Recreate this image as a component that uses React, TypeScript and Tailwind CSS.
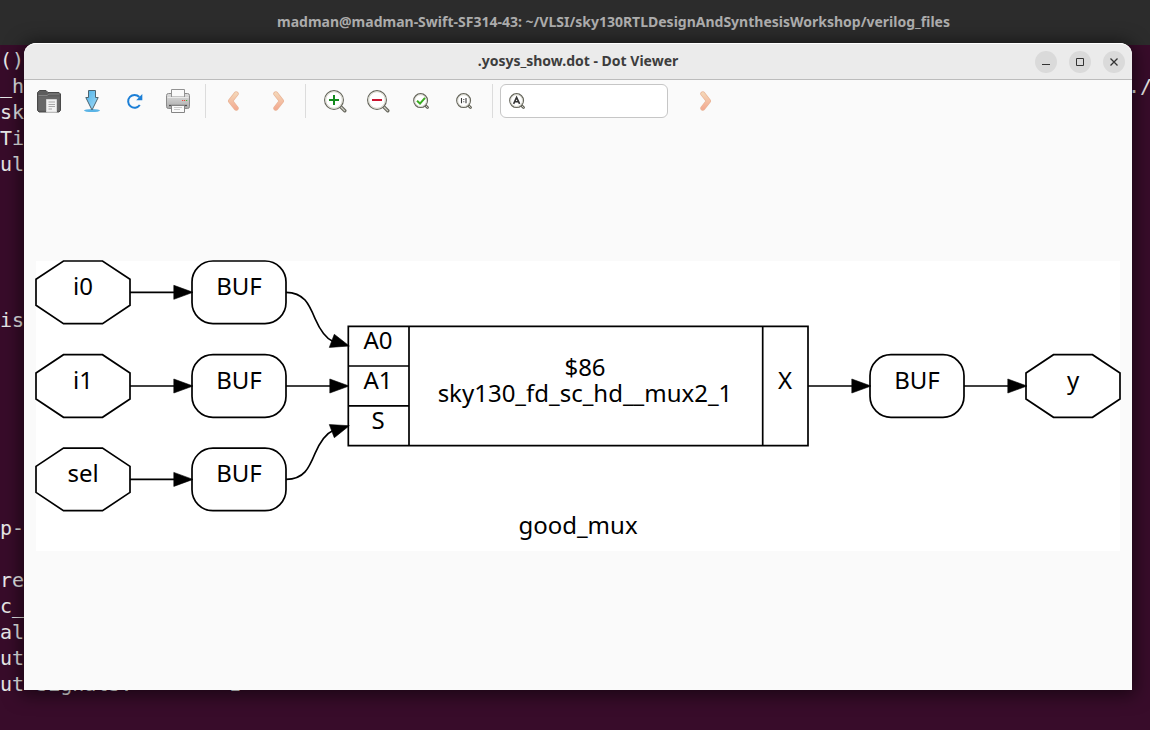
import type { ReactNode } from "react";

type TerminalLine = { start: string; end?: string };

const terminalLines: TerminalLine[] = [
  { start: "()" },
  { start: "_h", end: "./" },
  { start: "sk" },
  { start: "Ti" },
  { start: "ul" },
  { start: "" },
  { start: "" },
  { start: "" },
  { start: "" },
  { start: "" },
  { start: "is" },
  { start: "" },
  { start: "" },
  { start: "" },
  { start: "" },
  { start: "" },
  { start: "" },
  { start: "" },
  { start: "p-" },
  { start: "" },
  { start: "re" },
  { start: "c_" },
  { start: "al" },
  { start: "ut" },
  { start: "ut signals:        1" },
];

function FolderIcon() {
  return (
    <svg className="size-6" viewBox="0 0 24 24" aria-hidden="true">
      <path d="M.5 21.500V3.500L2.500 1.500H9L11 3.500H22L23.500 5V21.500L22 23H2Z" fill="#5d5d5d" stroke="#494949" />
      <path d="M1.500 6.500H10L12 5H22.500" fill="none" stroke="#858585" />
      <path d="M1.500 7.500H22.500V21.500H1.500Z" fill="#707070" opacity=".6" />
      <path d="M9.500 10.500H19.500V23H9.500Z" fill="#f2f2f2" stroke="#d5d5d5" />
      <path d="M11.500 13H18M11.500 15.500H18M11.500 17.500H18M11.500 20H15" stroke="#a8a8a8" />
    </svg>
  );
}

function DownloadIcon() {
  return (
    <svg className="size-6" viewBox="0 0 24 24" aria-hidden="true">
      <defs>
        <linearGradient id="down" x1="0" x2="1" y1="0" y2="1">
          <stop offset="0" stopColor="#4db2e8" />
          <stop offset="1" stopColor="#a5dcf8" />
        </linearGradient>
      </defs>
      <ellipse cx="12" cy="21.600" rx="8" ry="1.500" fill="#5ab4e6" />
      <path d="M8.500 1.500H15.500V8.500H18.200L12 21L5.800 8.500H8.500Z" fill="url(#down)" stroke="#4c6470" />
    </svg>
  );
}

function RefreshIcon() {
  return (
    <svg className="size-6" viewBox="0 0 24 24" aria-hidden="true">
      <path d="M16.800 16A6.400 6.400 0 1 1 16.300 8" fill="none" stroke="#1c7fd6" strokeWidth="2" />
      <path d="M19.300 5V11.200H13.200Z" fill="#1c7fd6" />
    </svg>
  );
}

function PrinterIcon() {
  return (
    <svg className="size-6" viewBox="0 0 24 24" aria-hidden="true">
      <defs>
        <linearGradient id="printer" x2="0" y2="1">
          <stop offset="0" stopColor="#dedede" />
          <stop offset="1" stopColor="#ababab" />
        </linearGradient>
      </defs>
      <rect x=".5" y="4.500" width="23" height="15" rx="2" fill="url(#printer)" stroke="#8a8a8a" />
      <path d="M5.500 .5H18.500V8H5.500Z" fill="#fafafa" stroke="#929292" />
      <path d="M1.500 8.500H22.500" stroke="#e9e9e9" />
      <path d="M3 16.500H21" stroke="#525252" strokeWidth="1.300" />
      <path d="M5.500 16.500H18.500V23.500H5.500Z" fill="#fafafa" stroke="#858585" />
      <path d="M8 18.500H16M8 20.500H14" stroke="#cccccc" />
      <path d="M16 11.500H17.200M18 11.500H19.200" stroke="#ef4a3a" />
      <path d="M20 11.500H21.200" stroke="#42b83c" />
    </svg>
  );
}

function ChevronIcon({ next = false }: { next?: boolean }) {
  const d = next ? "M2.800 2.800L8.500 10L2.800 17.200" : "M9.200 2.800L3.500 10L9.200 17.200";
  return (
    <svg className="h-5 w-3" viewBox="0 0 12 20" aria-hidden="true">
      <defs>
        <linearGradient id="chevron" gradientUnits="userSpaceOnUse" x1="0" x2="0" y1="0" y2="20">
          <stop offset="0" stopColor="#f4dcbc" />
          <stop offset="1" stopColor="#f3a58d" />
        </linearGradient>
      </defs>
      <path d={d} fill="none" stroke="#e9b497" strokeWidth="5" strokeLinecap="round" strokeLinejoin="round" />
      <path d={d} fill="none" stroke="url(#chevron)" strokeWidth="3.600" strokeLinecap="round" strokeLinejoin="round" />
    </svg>
  );
}

function LargeLens({ children }: { children: ReactNode }) {
  return (
    <svg className="size-6" viewBox="0 0 24 24" aria-hidden="true">
      <path d="M17.500 17.500L21.800 21.800" stroke="#66665c" strokeWidth="3.400" strokeLinecap="round" />
      <path d="M17.500 17.500L21.600 21.600" stroke="#cfcfc6" strokeWidth="1.300" strokeLinecap="round" />
      <circle cx="11" cy="11" r="9.400" fill="#fff" stroke="#66665c" strokeWidth="1.200" />
      <circle cx="11" cy="11" r="8.300" fill="none" stroke="#d6d6ca" />
      {children}
    </svg>
  );
}

function SmallLens({ children }: { children: ReactNode }) {
  return (
    <svg className="size-4 shrink-0" viewBox="0 0 16 16" aria-hidden="true">
      <path d="M12.200 12.200L14.500 14.500" stroke="#66665c" strokeWidth="2.800" strokeLinecap="round" />
      <path d="M12.200 12.200L14.400 14.400" stroke="#cfcfc6" strokeLinecap="round" />
      <circle cx="7.600" cy="7.600" r="6.900" fill="#fff" stroke="#66665c" strokeWidth="1.200" />
      <circle cx="7.600" cy="7.600" r="5.900" fill="none" stroke="#d0d0c6" strokeWidth=".9" />
      {children}
    </svg>
  );
}

function Tool({ label, narrow = false, children }: { label: string; narrow?: boolean; children: ReactNode }) {
  return (
    <button
      type="button"
      aria-label={label}
      className={`flex h-[34px] items-center justify-center ${narrow ? "w-[41px]" : "w-[43px]"}`}
    >
      {children}
    </button>
  );
}

function Separator() {
  return <div className="mx-1.5 h-[34px] w-px bg-[#dcdcdc]" />;
}

function Toolbar() {
  return (
    <div className="flex h-[42px] shrink-0 items-center px-[3px]">
      <div className="flex">
        <Tool label="Open"><FolderIcon /></Tool>
        <Tool label="Export"><DownloadIcon /></Tool>
        <Tool label="Reload"><RefreshIcon /></Tool>
        <Tool label="Print"><PrinterIcon /></Tool>
      </div>
      <Separator />
      <div className="flex gap-[5px]">
        <Tool label="Back" narrow><ChevronIcon /></Tool>
        <Tool label="Forward" narrow><ChevronIcon next /></Tool>
      </div>
      <Separator />
      <div className="flex px-px">
        <Tool label="Zoom in">
          <LargeLens><path d="M6 11H16M11 6V16" stroke="#128a1c" strokeWidth="2" /></LargeLens>
        </Tool>
        <Tool label="Zoom out">
          <LargeLens><path d="M6 11H16" stroke="#cc1430" strokeWidth="2" /></LargeLens>
        </Tool>
        <Tool label="Zoom to fit">
          <SmallLens><path d="M4 7.800L7 10.600L12 4.800" fill="none" stroke="#3aad20" strokeWidth="2" /></SmallLens>
        </Tool>
        <Tool label="Zoom to actual size">
          <SmallLens><path d="M5.500 5V10.300M10 5V10.300M7.300 6.500H8.300M7.300 8.800H8.300" stroke="#3a3a3a" strokeWidth="1.100" /></SmallLens>
        </Tool>
      </div>
      <Separator />
      <label className="ml-px flex h-[34px] w-[168px] items-center rounded-md border border-[#c6c6c6] bg-white px-2">
        <SmallLens>
          <path d="M4.600 10.800L7.600 4.300L10.600 10.800M5.800 8.800H9.400" fill="none" stroke="#353535" strokeWidth="1.600" />
        </SmallLens>
        <input type="text" aria-label="Find" className="min-w-0 flex-1 bg-transparent px-2 text-sm outline-none" />
      </label>
      <div className="ml-4 flex">
        <Tool label="Find next"><ChevronIcon next /></Tool>
      </div>
    </div>
  );
}

function Octagon({ x, y, label }: { x: number; y: number; label: string }) {
  return (
    <g transform={`translate(${x} ${y})`}>
      <path d="M-47 -13L-19.500 -31.300H19.500L47 -13V13L19.500 31.300H-19.500L-47 13Z" fill="#fff" stroke="#000" strokeWidth="1.700" />
      <text y="3" textAnchor="middle">{label}</text>
    </g>
  );
}

function Buffer({ x, y }: { x: number; y: number }) {
  return (
    <g transform={`translate(${x} ${y})`}>
      <rect x="-47" y="-31.300" width="94" height="62.600" rx="21" fill="#fff" stroke="#000" strokeWidth="1.700" />
      <text y="3" textAnchor="middle">BUF</text>
    </g>
  );
}

function Arrow({ x, y }: { x: number; y: number }) {
  return (
    <g transform={`translate(${x} ${y})`}>
      <path d="M0 0H44" stroke="#000" strokeWidth="1.700" />
      <path d="M43.800 -7L63 0L43.800 7Z" stroke="#000" strokeWidth=".6" />
    </g>
  );
}

function Graph() {
  return (
    <svg
      viewBox="0 0 1084 290"
      role="img"
      aria-label="good_mux"
      className="block w-full overflow-visible bg-white font-['Noto_Sans','Open_Sans',sans-serif] text-[24px]"
    >
      <Octagon x={47} y={31.3} label="i0" />
      <Octagon x={47} y={125} label="i1" />
      <Octagon x={47} y={218.4} label="sel" />
      <Buffer x={203} y={31.3} />
      <Buffer x={203} y={125} />
      <Buffer x={203} y={218.4} />
      <Buffer x={881} y={125} />
      <Octagon x={1037} y={125} label="y" />

      <g fill="none" stroke="#000" strokeWidth="1.700">
        <path d="M312.300 65.300H772V184.700H312.300ZM373 65.300V184.700M726.700 65.300V184.700M312.300 105H373M312.300 144.800H373" />
        <path d="M250 31.300C268 31.500 273 43 279 57.500C284 69 289 77 297 80.500" />
        <path d="M250 218.400C268 218.500 273 207 279 192.500C284 181 289 173 297 169.500" />
      </g>
      <path d="M298.300 73.300L313.300 85L293.300 86.400Z" stroke="#000" strokeWidth=".6" />
      <path d="M298.300 176.700L313.300 164.700L293.300 163.600Z" stroke="#000" strokeWidth=".6" />

      <Arrow x={94} y={31.3} />
      <Arrow x={94} y={125} />
      <Arrow x={94} y={218.4} />
      <Arrow x={250} y={125} />
      <Arrow x={772} y={125} />
      <Arrow x={928} y={125} />

      <g textAnchor="middle">
        <text x="342" y="88">A0</text>
        <text x="342" y="128">A1</text>
        <text x="342" y="168">S</text>
        <text x="549" y="115">$86</text>
        <text x="549" y="141">sky130_fd_sc_hd__mux2_1</text>
        <text x="749" y="128">X</text>
        <text x="542" y="273">good_mux</text>
      </g>
    </svg>
  );
}

function WindowButton({ label, children }: { label: string; children: ReactNode }) {
  return (
    <button type="button" aria-label={label} className="flex size-[22px] items-center justify-center rounded-full bg-[#dadada]">
      <svg className="size-4" viewBox="0 0 16 16" fill="none" stroke="#333" aria-hidden="true">
        {children}
      </svg>
    </button>
  );
}

export default function App() {
  return (
    <div className="relative flex h-screen flex-col overflow-hidden bg-[#380c2a] font-['Noto_Sans','Open_Sans',sans-serif]">
      <header className="flex h-[45px] shrink-0 items-center justify-center bg-[#2c2c2c] pb-0.5 pl-[77px] text-[14px] font-bold text-[#adadad]">
        <h1>madman@madman-Swift-SF314-43: ~/VLSI/sky130RTLDesignAndSynthesisWorkshop/verilog_files</h1>
      </header>
      <div className="pt-0.5 font-['DejaVu_Sans_Mono',monospace] text-[20px] leading-[26px] whitespace-pre text-[#e8e8e8]">
        {terminalLines.map((line, index) => (
          <div key={index} className="-mr-0.5 flex h-[26px] justify-between">
            <span>{line.start}</span>
            {line.end && <span>{line.end}</span>}
          </div>
        ))}
      </div>

      <main className="absolute top-[43px] right-[18px] bottom-10 left-6 flex flex-col rounded-t-xl bg-[#fafafa] shadow-[0_2px_18px_3px_rgba(0,0,0,0.55)]">
        <div className="grid h-[37px] shrink-0 grid-cols-[1fr_auto_1fr] items-center rounded-t-xl border-t border-b border-t-white border-b-[#bcbcbc] bg-[#ebebeb] px-[7px]">
          <h2 className="col-start-2 pb-0.5 text-[14px] font-bold text-[#3d3d3d]">.yosys_show.dot - Dot Viewer</h2>
          <div className="flex justify-end gap-3">
            <WindowButton label="Minimize"><path d="M4 10.500H12" /></WindowButton>
            <WindowButton label="Maximize"><path d="M4.500 4.500H11.500V11.500H4.500Z" /></WindowButton>
            <WindowButton label="Close"><path d="M4.500 4.500L11.500 11.500M11.500 4.500L4.500 11.500" strokeWidth="1.300" /></WindowButton>
          </div>
        </div>
        <Toolbar />
        <div className="flex min-h-0 flex-1 items-center px-3">
          <Graph />
        </div>
      </main>
    </div>
  );
}
